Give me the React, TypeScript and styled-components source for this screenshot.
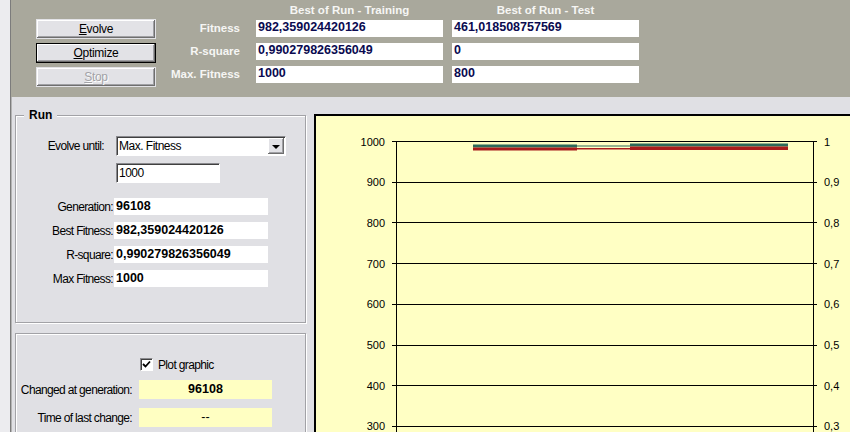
import React from "react";
import styled, { createGlobalStyle } from "styled-components";

const GlobalStyle = createGlobalStyle`
  html, body {
    margin: 0;
    padding: 0;
    background: #e0e0e4;
  }
  * {
    box-sizing: border-box;
  }
`;

const PANEL_BG = "#e0e0e4";
const BAND_BG = "#a9a89c";
const CHART_BG = "#ffffc4";

const Window = styled.div`
  width: 850px;
  height: 432px;
  display: flex;
  overflow: hidden;
  font-family: "Liberation Sans", Arial, sans-serif;
  background: ${PANEL_BG};
`;

const Gutter = styled.div`
  width: 10px;
  flex: none;
  background: #ececef;
`;

const Main = styled.div`
  flex: 1;
  display: flex;
  flex-direction: column;
  border-left: 1px solid #7c7c7c;
  box-shadow: inset 1px 0 0 #b4b4b4;
`;

const TopBand = styled.div`
  height: 97px;
  flex: none;
  display: flex;
  padding-left: 25px;
  background: ${BAND_BG};
`;

const ButtonColumn = styled.div`
  width: 120px;
  margin-top: 19px;
  display: flex;
  flex-direction: column;
  gap: 4px;
`;

const Button = styled.div<{ $isDefault?: boolean; $disabled?: boolean }>`
  height: 20px;
  display: flex;
  align-items: center;
  justify-content: center;
  font-size: 12px;
  letter-spacing: -0.3px;
  background: #e2e2e6;
  color: ${({ $disabled }) => ($disabled ? "#a2a2a6" : "#000")};
  text-shadow: ${({ $disabled }) => ($disabled ? "1px 1px 0 #fff" : "none")};
  border: 1px solid ${({ $isDefault }) => ($isDefault ? "#000" : "transparent")};
  box-shadow: inset -1px -1px 0 #6e6e6e, inset 1px 1px 0 #fff,
    inset -2px -2px 0 #a0a0a4;
`;

const BestGrid = styled.div`
  margin-left: 4px;
  padding-top: 3px;
  display: flex;
  flex-direction: column;
`;

const FieldRow = styled.div<{ $header?: boolean }>`
  display: flex;
  gap: 9px;
  height: ${({ $header }) => ($header ? "14px" : "17px")};
  margin-bottom: ${({ $header }) => ($header ? "3px" : "6px")};
`;

const BandLabel = styled.div`
  width: 87px;
  padding-right: 7px;
  text-align: right;
  font-size: 11.5px;
  font-weight: bold;
  line-height: 17px;
  color: #f6f6f4;
`;

const ColumnTitle = styled.div`
  width: 187px;
  text-align: center;
  font-size: 11.5px;
  font-weight: bold;
  line-height: 14px;
  color: #f6f6f4;
`;

const BandValue = styled.div`
  width: 187px;
  height: 17px;
  padding-left: 2px;
  background: #fff;
  color: #0a0a50;
  font-size: 12.5px;
  font-weight: bold;
  line-height: 15px;
`;

const Lower = styled.div`
  flex: 1;
  display: flex;
  min-height: 0;
`;

const LeftPanel = styled.div`
  width: 298px;
  flex: none;
  padding: 18px 3px 0 4px;
  display: flex;
  flex-direction: column;
  gap: 10px;
`;

const GroupBox = styled.div<{ $height: number }>`
  position: relative;
  height: ${({ $height }) => $height}px;
  flex: none;
  border: 1px solid #a2a2a6;
  box-shadow: 1px 1px 0 #fff, inset 1px 1px 0 #fff;
`;

const GroupCaption = styled.span`
  position: absolute;
  top: -8px;
  left: 8px;
  padding: 0 5px;
  background: ${PANEL_BG};
  font-size: 12px;
  font-weight: bold;
  line-height: 14px;
`;

const UntilGrid = styled.div`
  padding-top: 20px;
  display: grid;
  grid-template-columns: 88px 170px;
  column-gap: 12px;
  row-gap: 7px;
`;

const PlainLabel = styled.div<{ $right?: boolean }>`
  font-size: 12px;
  letter-spacing: -0.65px;
  text-align: ${({ $right }) => ($right ? "right" : "left")};
  align-self: center;
  white-space: nowrap;
`;

const Sunken = styled.div<{ $width?: number }>`
  width: ${({ $width }) => ($width ? `${$width}px` : "auto")};
  height: 20px;
  display: flex;
  align-items: center;
  padding-left: 2px;
  background: #fff;
  font-size: 12px;
  letter-spacing: -0.5px;
  border-top: 1px solid #8a8a8e;
  border-left: 1px solid #8a8a8e;
  border-right: 1px solid #fff;
  border-bottom: 1px solid #fff;
  box-shadow: inset 1px 1px 0 #404040;
`;

const DropButton = styled.span`
  margin-left: auto;
  margin-right: 1px;
  width: 16px;
  height: 16px;
  display: flex;
  align-items: center;
  justify-content: center;
  background: #e2e2e6;
  box-shadow: inset -1px -1px 0 #6e6e6e, inset 1px 1px 0 #fff,
    inset -2px -2px 0 #a0a0a4;

  &::after {
    content: "";
    border-left: 4px solid transparent;
    border-right: 4px solid transparent;
    border-top: 4px solid #000;
    margin-top: 1px;
  }
`;

const StatsGrid = styled.div`
  margin-top: 15px;
  display: grid;
  grid-template-columns: 97px 154px;
  column-gap: 1px;
  row-gap: 7px;
`;

const StatValue = styled.div`
  height: 17px;
  padding-left: 2px;
  background: #fff;
  font-size: 12.5px;
  font-weight: bold;
  line-height: 17px;
`;

const ChangeGrid = styled.div`
  padding-top: 24px;
  display: grid;
  grid-template-columns: 116px 133px;
  column-gap: 7px;
  row-gap: 9px;
`;

const CheckRow = styled.div`
  grid-column: 2;
  display: flex;
  align-items: center;
  gap: 5px;
  height: 13px;
  padding-left: 1px;
`;

const CheckBox = styled.span`
  width: 13px;
  height: 13px;
  display: flex;
  align-items: center;
  justify-content: center;
  background: #fff;
  border-top: 1px solid #8a8a8e;
  border-left: 1px solid #8a8a8e;
  border-right: 1px solid #fff;
  border-bottom: 1px solid #fff;
  box-shadow: inset 1px 1px 0 #404040;
`;

const YellowValue = styled.div<{ $bold?: boolean }>`
  height: 19px;
  background: #ffffc2;
  font-size: 12.5px;
  font-weight: ${({ $bold }) => ($bold ? "bold" : "normal")};
  line-height: 19px;
  text-align: center;
`;

const ChartFrame = styled.div`
  flex: 1;
  margin: 17px 0 0 5px;
  border-top: 2px solid #000;
  border-left: 2px solid #000;
  background: ${CHART_BG};
  overflow: hidden;
`;

const ChartSvg = styled.svg`
  display: block;
  font-family: "Liberation Sans", Arial, sans-serif;
  font-size: 11px;
`;

const leftTicks = ["1000", "900", "800", "700", "600", "500", "400", "300"];
const rightTicks = ["1", "0,9", "0,8", "0,7", "0,6", "0,5", "0,4", "0,3"];

const Chart: React.FC = () => {
  const top = 25.5;
  const step = 40.7;
  return (
    <ChartSvg width={533} height={320}>
      {leftTicks.map((t, i) => {
        const y = top + i * step;
        return (
          <g key={t}>
            <line x1={76} x2={501} y1={y} y2={y} stroke="#000" strokeWidth={1} shapeRendering="crispEdges" />
            <text x={69} y={y + 4} textAnchor="end">{t}</text>
            <text x={508} y={y + 4}>{rightTicks[i]}</text>
          </g>
        );
      })}
      <line x1={80} x2={80} y1={top} y2={320} stroke="#000" strokeWidth={1} shapeRendering="crispEdges" />
      <line x1={497} x2={497} y1={top} y2={320} stroke="#000" strokeWidth={1} shapeRendering="crispEdges" />
      {/* fitness / r-square traces */}
      <rect x={157} y={28.5} width={104} height={3} fill="#2c6a5a" />
      <rect x={157} y={31.5} width={104} height={3} fill="#a81c1c" />
      <rect x={261} y={29.5} width={53} height={1} fill="#2c6a5a" />
      <rect x={261} y={32} width={53} height={1.5} fill="#a81c1c" />
      <rect x={314} y={27.5} width={158} height={3} fill="#2c6a5a" />
      <rect x={314} y={30.5} width={158} height={3.5} fill="#a81c1c" />
    </ChartSvg>
  );
};

const App: React.FC = () => {
  return (
    <>
      <GlobalStyle />
      <Window>
        <Gutter />
        <Main>
          <TopBand>
            <ButtonColumn>
              <Button><u>E</u>volve</Button>
              <Button $isDefault><u>O</u>ptimize</Button>
              <Button $disabled><u>S</u>top</Button>
            </ButtonColumn>
            <BestGrid>
              <FieldRow $header>
                <BandLabel />
                <ColumnTitle>Best of Run - Training</ColumnTitle>
                <ColumnTitle>Best of Run - Test</ColumnTitle>
              </FieldRow>
              <FieldRow>
                <BandLabel>Fitness</BandLabel>
                <BandValue>982,359024420126</BandValue>
                <BandValue>461,018508757569</BandValue>
              </FieldRow>
              <FieldRow>
                <BandLabel>R-square</BandLabel>
                <BandValue>0,990279826356049</BandValue>
                <BandValue>0</BandValue>
              </FieldRow>
              <FieldRow>
                <BandLabel>Max. Fitness</BandLabel>
                <BandValue>1000</BandValue>
                <BandValue>800</BandValue>
              </FieldRow>
            </BestGrid>
          </TopBand>
          <Lower>
            <LeftPanel>
              <GroupBox $height={208}>
                <GroupCaption>Run</GroupCaption>
                <UntilGrid>
                  <PlainLabel $right>Evolve until:</PlainLabel>
                  <Sunken>
                    Max. Fitness
                    <DropButton />
                  </Sunken>
                  <div />
                  <Sunken $width={104}>1000</Sunken>
                </UntilGrid>
                <StatsGrid>
                  <PlainLabel $right>Generation:</PlainLabel>
                  <StatValue>96108</StatValue>
                  <PlainLabel $right>Best Fitness:</PlainLabel>
                  <StatValue>982,359024420126</StatValue>
                  <PlainLabel $right>R-square:</PlainLabel>
                  <StatValue>0,990279826356049</StatValue>
                  <PlainLabel $right>Max Fitness:</PlainLabel>
                  <StatValue>1000</StatValue>
                </StatsGrid>
              </GroupBox>
              <GroupBox $height={140}>
                <ChangeGrid>
                  <CheckRow>
                    <CheckBox>
                      <svg width="9" height="9" viewBox="0 0 9 9">
                        <path d="M1 4 L3.5 6.5 L8 1.5" stroke="#000" strokeWidth="1.8" fill="none" />
                      </svg>
                    </CheckBox>
                    <PlainLabel>Plot graphic</PlainLabel>
                  </CheckRow>
                  <PlainLabel $right>Changed at generation:</PlainLabel>
                  <YellowValue $bold>96108</YellowValue>
                  <PlainLabel $right>Time of last change:</PlainLabel>
                  <YellowValue>--</YellowValue>
                </ChangeGrid>
              </GroupBox>
            </LeftPanel>
            <ChartFrame>
              <Chart />
            </ChartFrame>
          </Lower>
        </Main>
      </Window>
    </>
  );
};

export default App;
